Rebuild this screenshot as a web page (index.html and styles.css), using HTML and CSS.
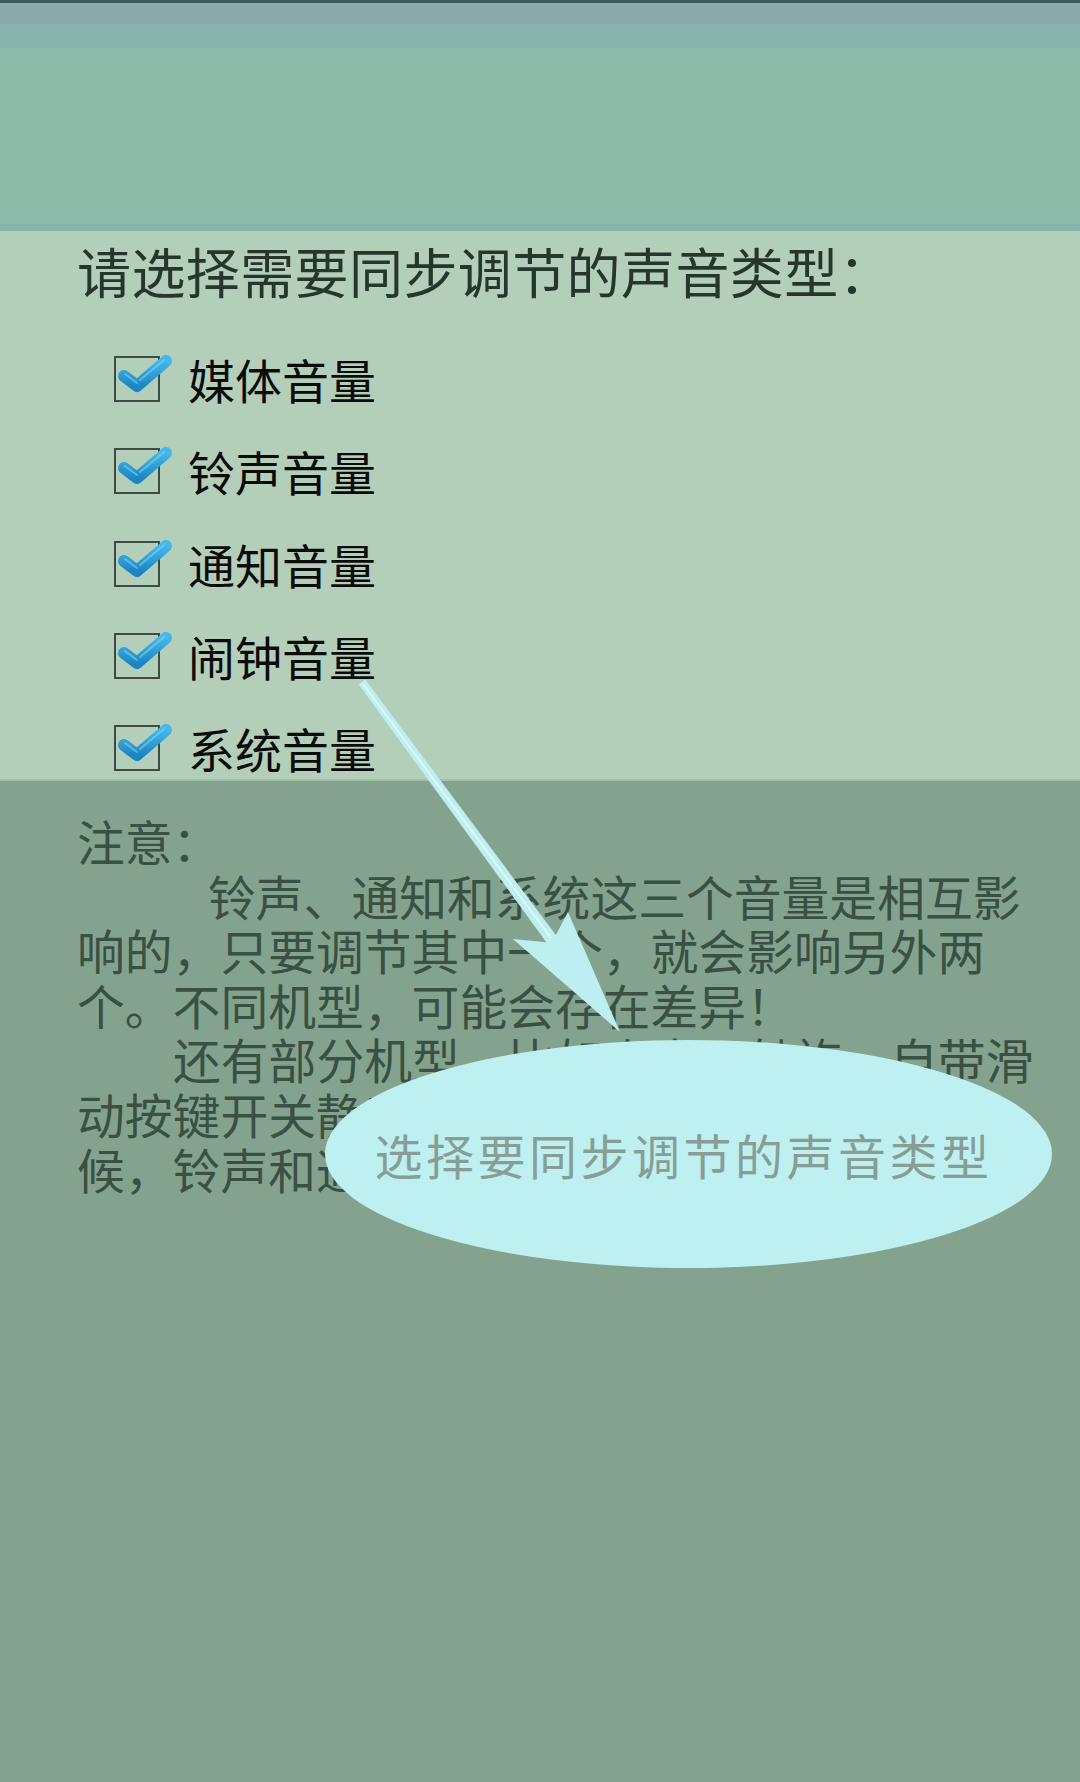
FILE: index.html
```html
<!DOCTYPE html>
<html lang="zh-CN">
<head>
<meta charset="utf-8">
<title>声音同步</title>
<link rel="stylesheet" href="styles.css">
</head>
<body>
<div class="screen">
  <div class="statusbar"></div>
  <div class="header"></div>
  <section class="panel">
    <h1 class="title">请选择需要同步调节的声音类型：</h1>
    <ul class="options">
      <li class="option"><span class="box"><svg class="check" viewBox="0 0 64 40" width="64" height="40"><defs><linearGradient id="cg" x1="0" y1="0" x2="0" y2="1"><stop offset="0" stop-color="#45b8ea"/><stop offset="1" stop-color="#1d86c2"/></linearGradient></defs><path d="M8 18 L21 28 L50 3" fill="none" stroke="url(#cg)" stroke-width="12" stroke-linecap="round" stroke-linejoin="round"/><path d="M9 16 L21 25 M24 22 L48 2" fill="none" stroke="#7fd3f4" stroke-width="2" stroke-linecap="round" opacity="0.6"/></svg></span><span class="label">媒体音量</span></li>
      <li class="option"><span class="box"><svg class="check" viewBox="0 0 64 40" width="64" height="40"><path d="M8 18 L21 28 L50 3" fill="none" stroke="url(#cg)" stroke-width="12" stroke-linecap="round" stroke-linejoin="round"/><path d="M9 16 L21 25 M24 22 L48 2" fill="none" stroke="#7fd3f4" stroke-width="2" stroke-linecap="round" opacity="0.6"/></svg></span><span class="label">铃声音量</span></li>
      <li class="option"><span class="box"><svg class="check" viewBox="0 0 64 40" width="64" height="40"><path d="M8 18 L21 28 L50 3" fill="none" stroke="url(#cg)" stroke-width="12" stroke-linecap="round" stroke-linejoin="round"/><path d="M9 16 L21 25 M24 22 L48 2" fill="none" stroke="#7fd3f4" stroke-width="2" stroke-linecap="round" opacity="0.6"/></svg></span><span class="label">通知音量</span></li>
      <li class="option"><span class="box"><svg class="check" viewBox="0 0 64 40" width="64" height="40"><path d="M8 18 L21 28 L50 3" fill="none" stroke="url(#cg)" stroke-width="12" stroke-linecap="round" stroke-linejoin="round"/><path d="M9 16 L21 25 M24 22 L48 2" fill="none" stroke="#7fd3f4" stroke-width="2" stroke-linecap="round" opacity="0.6"/></svg></span><span class="label">闹钟音量</span></li>
      <li class="option"><span class="box"><svg class="check" viewBox="0 0 64 40" width="64" height="40"><path d="M8 18 L21 28 L50 3" fill="none" stroke="url(#cg)" stroke-width="12" stroke-linecap="round" stroke-linejoin="round"/><path d="M9 16 L21 25 M24 22 L48 2" fill="none" stroke="#7fd3f4" stroke-width="2" stroke-linecap="round" opacity="0.6"/></svg></span><span class="label">系统音量</span></li>
    </ul>
  </section>
  <section class="notes">
    <p class="line">注意：</p>
    <p class="line indent-a">铃声、通知和系统这三个音量是相互影</p>
    <p class="line">响的，只要调节其中一个，就会影响另外两</p>
    <p class="line">个。不同机型，可能会存在差异！</p>
    <p class="line indent-b">还有部分机型，比如小米、魅族，自带滑</p>
    <p class="line">动按键开关静音，打开静音模式的时</p>
    <p class="line">候，铃声和通知也会静音。</p>
  </section>

  <svg class="arrow" viewBox="0 0 1080 1782" width="1080" height="1782">
    <polygon points="358.8,684.4 546.3,942.3 513,939 620,1032 568,912 555.9,935.1 365.2,679.6" fill="#bdeff1"/>
    <line x1="363" y1="684" x2="551" y2="938" stroke="#e6fbfb" stroke-width="2" opacity="0.8"/>
  </svg>

  <div class="bubble"><span class="bubble-text">选择要同步调节的声音类型</span></div>
</div>
</body>
</html>
```
FILE: styles.css
```css
html, body {
  margin: 0;
  padding: 0;
}

body {
  background: #84a38f;
  font-family: "Noto Sans CJK SC", "Noto Sans", sans-serif;
}

.screen {
  position: relative;
  width: 1080px;
  min-height: 1782px;
  background: #84a38f;
  overflow: hidden;
}

.statusbar {
  height: 48px;
  background: linear-gradient(to bottom, #3d5b59 0, #3d5b59 3px, #8aa9a7 3px, #8aa9a7 24px, #89b4ae 24px, #89b4ae 48px);
}

.header {
  height: 176px;
  background: #8fbbab;
  border-bottom: 7px solid #85b4ac;
}

.panel {
  box-sizing: border-box;
  height: 548px;
  padding: 0 0 0 77px;
  background: #b4cfb9;
}

.title {
  margin: 0;
  font-size: 54px;
  font-weight: normal;
  line-height: 80px;
  letter-spacing: 0.4px;
  color: #26362d;
  white-space: nowrap;
}

.options {
  list-style: none;
  margin: 45px 0 0 0;
  padding: 0 0 0 37px;
  display: flex;
  flex-direction: column;
  gap: 46.25px;
}

.option {
  display: flex;
  align-items: center;
  gap: 28px;
  height: 46px;
}

.box {
  position: relative;
  box-sizing: border-box;
  width: 46px;
  height: 46px;
  flex: none;
  border: 2px solid #3e4b43;
}

.check {
  position: absolute;
  left: 0;
  top: 0;
  overflow: visible;
}

.label {
  font-size: 47px;
  line-height: 46px;
  color: #0a0b0a;
  white-space: nowrap;
}

.notes {
  border-top: 2px solid #a3bea9;
  padding: 33px 0 0 77px;
  background: #84a38f;
}

.line {
  margin: 0;
  font-size: 47.8px;
  line-height: 54.6px;
  color: #3a5043;
  white-space: nowrap;
}

.indent-a {
  text-indent: 131px;
}

.indent-b {
  text-indent: 96px;
}

.arrow {
  position: absolute;
  left: 0;
  top: 0;
  pointer-events: none;
}

.bubble {
  position: absolute;
  left: 325px;
  top: 1040px;
  width: 727px;
  height: 228px;
  border-radius: 50%;
  background: #bef0f1;
  display: flex;
  align-items: center;
  justify-content: center;
}

.bubble-text {
  font-size: 48px;
  letter-spacing: 3.5px;
  color: #889e95;
  white-space: nowrap;
  padding-right: 10px;
}
```
